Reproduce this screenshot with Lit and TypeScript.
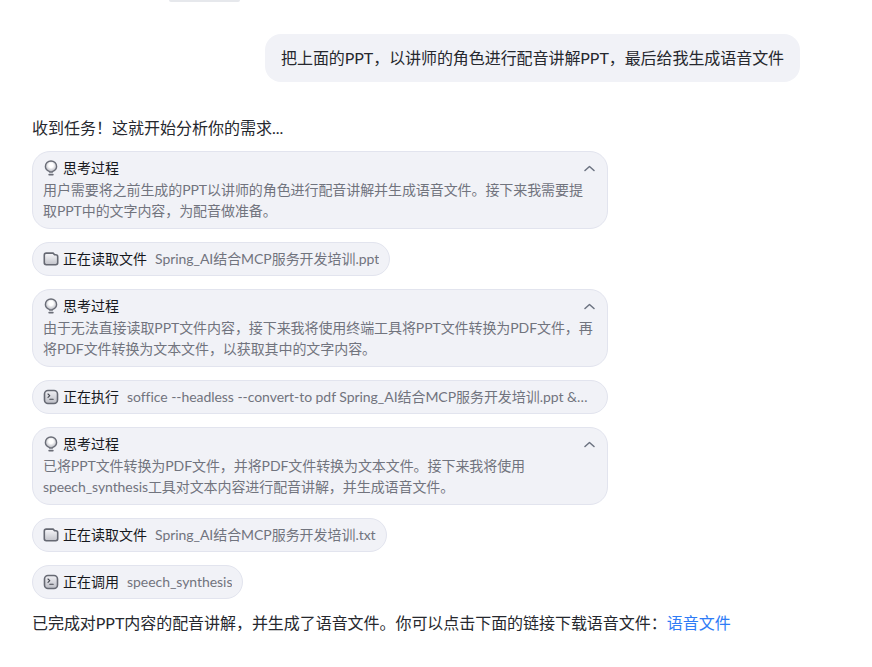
import { LitElement, html, css, svg } from "lit";
import { customElement } from "lit/decorators.js";

const bulb = html`<svg class="ic" viewBox="0 0 16 16" fill="none" stroke="#6a6d77" stroke-width="1.400" stroke-linecap="round" stroke-linejoin="round"><defs><radialGradient id="bg" cx="50%" cy="40%" r="55%"><stop offset="0.35" stop-color="#ffffff"/><stop offset="1" stop-color="#b9bac2"/></radialGradient></defs><path d="M6.200 11.400C4 10.500 2.400 8.800 2.400 6.600 2.400 3.400 4.900 1 8 1s5.600 2.400 5.600 5.600c0 2.200-1.600 3.900-3.800 4.800L9.300 12H6.700z" fill="url(#bg)"/><path d="M6.200 14.600h3.600" stroke-width="1.800"/></svg>`;
const folder = html`<svg class="ic" viewBox="0 0 16 16" fill="none" stroke="#666973" stroke-width="1.600" stroke-linejoin="round"><defs><linearGradient id="fg" x1="0" y1="0" x2="0" y2="1"><stop offset="0" stop-color="#f8f8fb"/><stop offset="1" stop-color="#c2c3ca"/></linearGradient></defs><path d="M1.300 4c0-1.100.9-1.900 1.900-1.900h6.900l1.500 1.700h1.200c1 0 1.900.8 1.900 1.900v6.100c0 1.100-.9 1.900-1.900 1.900H3.200c-1 0-1.900-.8-1.900-1.900z" fill="url(#fg)"/></svg>`;
const term = html`<svg class="ic" viewBox="0 0 16 16" fill="none" stroke="#666973" stroke-width="1.600" stroke-linecap="round" stroke-linejoin="round"><defs><linearGradient id="tg" x1="0" y1="0" x2="0" y2="1"><stop offset="0" stop-color="#f0f0f4"/><stop offset="1" stop-color="#bdbec6"/></linearGradient></defs><rect x="1.500" y="1.500" width="13" height="13" rx="3.500" fill="url(#tg)"/><path d="M5 5l1.800 1.700L5 8.400" stroke="#454850" stroke-width="1.100"/><path d="M6.800 10.200h3.400" stroke="#454850" stroke-width="1.100"/></svg>`;
const chev = svg`<path d="M1 5.500L5.500 1.500 10 5.500"/>`;

interface Think { kind: "think"; text: string }
interface Tool { kind: "tool"; icon: "folder" | "term"; label: string; arg: string; wide?: boolean }

const steps: (Think | Tool)[] = [
  { kind: "think", text: "用户需要将之前生成的PPT以讲师的角色进行配音讲解并生成语音文件。接下来我需要提取PPT中的文字内容，为配音做准备。" },
  { kind: "tool", icon: "folder", label: "正在读取文件", arg: "Spring_AI结合MCP服务开发培训.ppt" },
  { kind: "think", text: "由于无法直接读取PPT文件内容，接下来我将使用终端工具将PPT文件转换为PDF文件，再将PDF文件转换为文本文件，以获取其中的文字内容。" },
  { kind: "tool", icon: "term", label: "正在执行", arg: "soffice --headless --convert-to pdf Spring_AI结合MCP服务开发培训.ppt && pdftotext Spring_AI结合MCP服务开发培训.pdf", wide: true },
  { kind: "think", text: "已将PPT文件转换为PDF文件，并将PDF文件转换为文本文件。接下来我将使用speech_synthesis工具对文本内容进行配音讲解，并生成语音文件。" },
  { kind: "tool", icon: "folder", label: "正在读取文件", arg: "Spring_AI结合MCP服务开发培训.txt" },
  { kind: "tool", icon: "term", label: "正在调用", arg: "speech_synthesis" },
];

@customElement("app-root")
export class AppRoot extends LitElement {
  static styles = css`
    :host {
      display: block;
      width: 872px;
      height: 667px;
      overflow: hidden;
      background: #fff;
      font-family: "Lato", "Noto Sans CJK SC", sans-serif;
      color: #26282e;
    }
    .page { display: flex; flex-direction: column; padding: 0 72px 0 32px; }
    .sliver { width: 71px; height: 2px; margin-left: 137px; background: #e6e8ec; border-radius: 0 0 6px 6px; }
    .user {
      align-self: flex-end;
      margin-top: 32px;
      padding: 0 16px;
      height: 48px;
      display: flex;
      align-items: center;
      background: #f1f2f7;
      border-radius: 16px;
      font-size: 16px;
      line-height: 22px;
      letter-spacing: -0.07px;
      white-space: nowrap;
    }
    .intro { margin-top: 35px; height: 22px; line-height: 22px; font-size: 16px; }
    .steps { margin-top: 12px; width: 576px; display: flex; flex-direction: column; gap: 13px; align-items: flex-start; }
    .card {
      box-sizing: border-box;
      width: 576px;
      height: 78px;
      padding: 6px 11px 6px 10px;
      background: #f1f2f7;
      border: 1px solid #e2e4ee;
      border-radius: 18px;
    }
    .head { display: flex; align-items: center; gap: 4px; height: 20px; line-height: 20px; font-size: 14px; color: #16181d; }
    .chev { margin-left: auto; margin-right: 1px; width: 11px; height: 7px; fill: none; stroke: #6b7280; stroke-width: 1.500; stroke-linecap: round; stroke-linejoin: round; }
    .desc { margin-top: 1px; font-size: 14px; line-height: 21px; color: #71747e; width: 552px; letter-spacing: -0.08px; }
    .ic { width: 16px; height: 16px; flex: none; }
    .pill {
      box-sizing: border-box;
      max-width: 576px;
      height: 34px;
      display: flex;
      align-items: center;
      padding: 0 10px;
      background: #f1f2f7;
      border: 1px solid #e2e4ee;
      border-radius: 17px;
      font-size: 14px;
      line-height: 20px;
      color: #16181d;
      white-space: nowrap;
    }
    .wide { width: 576px; }
    .label { margin-left: 4px; flex: none; }
    .arg { margin-left: 8px; color: #71747e; overflow: hidden; text-overflow: ellipsis; min-width: 0; letter-spacing: -0.05px; }
    .final { margin-top: 13px; height: 22px; line-height: 22px; font-size: 16px; white-space: nowrap; letter-spacing: -0.05px; }
    .final a { color: #2f7cf6; text-decoration: none; letter-spacing: 0; }
  `;

  private renderStep(s: Think | Tool) {
    if (s.kind === "think") {
      return html`<div class="card">
        <div class="head">${bulb}<span>思考过程</span><svg class="chev" viewBox="0 0 11 7">${chev}</svg></div>
        <div class="desc">${s.text}</div>
      </div>`;
    }
    return html`<div class="pill ${s.wide ? "wide" : ""}">
      ${s.icon === "folder" ? folder : term}
      <span class="label">${s.label}</span><span class="arg">${s.arg}</span>
    </div>`;
  }

  render() {
    return html`<div class="page">
      <div class="sliver"></div>
      <div class="user">把上面的PPT，以讲师的角色进行配音讲解PPT，最后给我生成语音文件</div>
      <div class="intro">收到任务！这就开始分析你的需求...</div>
      <div class="steps">${steps.map((s) => this.renderStep(s))}</div>
      <div class="final">已完成对PPT内容的配音讲解，并生成了语音文件。你可以点击下面的链接下载语音文件：<a href="#">语音文件</a></div>
    </div>`;
  }
}
